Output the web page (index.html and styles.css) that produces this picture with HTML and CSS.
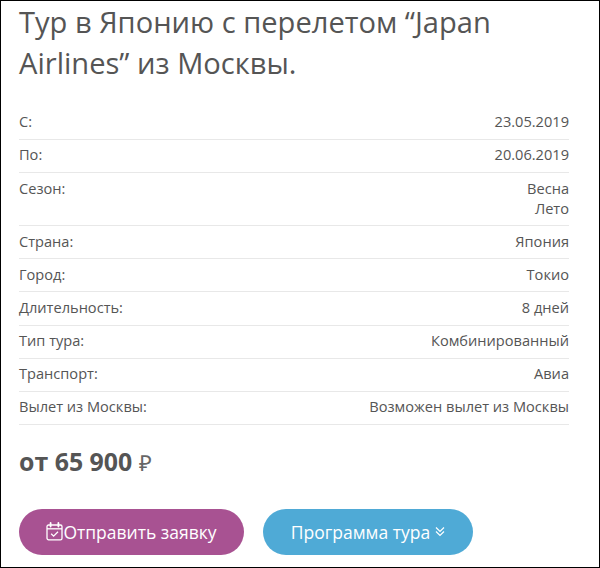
FILE: index.html
```html
<!DOCTYPE html>
<html lang="ru">
<head>
<meta charset="utf-8">
<title>Тур в Японию</title>
<link rel="stylesheet" href="styles.css">
</head>
<body>
<main class="card">
  <h1 class="title">Тур в Японию с перелетом “Japan Airlines” из Москвы.</h1>
  <dl class="specs">
    <div class="row"><dt>С:</dt><dd>23.05.2019</dd></div>
    <div class="row"><dt>По:</dt><dd>20.06.2019</dd></div>
    <div class="row"><dt>Сезон:</dt><dd>Весна<br>Лето</dd></div>
    <div class="row"><dt>Страна:</dt><dd>Япония</dd></div>
    <div class="row"><dt>Город:</dt><dd>Токио</dd></div>
    <div class="row"><dt>Длительность:</dt><dd>8 дней</dd></div>
    <div class="row"><dt>Тип тура:</dt><dd>Комбинированный</dd></div>
    <div class="row"><dt>Транспорт:</dt><dd>Авиа</dd></div>
    <div class="row"><dt>Вылет из Москвы:</dt><dd>Возможен вылет из Москвы</dd></div>
  </dl>
  <p class="price">от 65 900 <span class="currency">₽</span></p>
  <div class="actions">
    <a class="btn btn-purple" href="#">
      <svg class="cal" width="17" height="19" viewBox="0 0 17 19" fill="none" stroke="#fff" stroke-width="1.3"><rect x="1" y="3" width="15" height="14.8" rx="1.6"/><path d="M1 6.8h15"/><path d="M4.6 1v3.6M12.4 1v3.6" stroke-width="1.8" stroke-linecap="round"/><path d="M5.2 11.8l2.4 2.4 4.4-4.4"/></svg>
      <span>Отправить заявку</span>
    </a>
    <a class="btn btn-blue" href="#">
      <span>Программа тура</span>
      <svg class="chev" width="10" height="11" viewBox="0 0 10 11" fill="none" stroke="#fff" stroke-width="1.2"><path d="M1 1.5l4 4 4-4M1 5.5l4 4 4-4"/></svg>
    </a>
  </div>
</main>
</body>
</html>
```
FILE: styles.css
```css
* { box-sizing: border-box; }
html, body { margin: 0; height: 100%; }
body { background: #fff; font-family: "Open Sans", sans-serif; color: #555; }
.card {
  width: 600px;
  height: 568px;
  border: 1px solid #000;
  padding: 1px 30px 0 18px;
}
.title {
  margin: 0;
  font-size: 29.1px;
  font-weight: 400;
  line-height: 40.5px;
  color: #555;
}
.specs { margin: 24px 0 0; }
.row {
  display: flex;
  justify-content: space-between;
  padding: 4.4px 0 7.6px;
  border-bottom: 1px solid #e8e8e8;
  font-size: 14.6px;
  line-height: 20.1px;
}
.row dt, .row dd { margin: 0; }
.row dd { text-align: right; }
.price {
  margin: 18px 0 0;
  font-size: 24.9px;
  line-height: 36px;
  font-weight: 700;
  color: #555;
}
.currency { font-weight: 400; font-size: 22px; color: #666; }
.actions { display: flex; gap: 19px; margin-top: 29px; }
.btn {
  display: flex;
  align-items: center;
  justify-content: center;
  height: 46px;
  border-radius: 23px;
  color: #fff;
  text-decoration: none;
  font-size: 17.5px;
  font-weight: 400;
}
.btn-purple { width: 225px; background: #a85292; }
.btn-blue { width: 210px; background: #4faad6; gap: 5px; }
```
